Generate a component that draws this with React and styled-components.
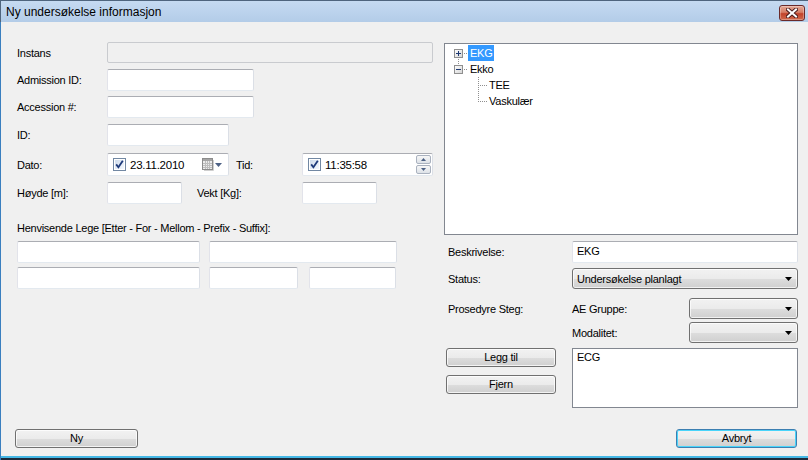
import React from 'react';
import styled, { createGlobalStyle } from 'styled-components';

const GlobalStyle = createGlobalStyle`
  html, body {
    margin: 0;
    padding: 0;
    background: #f0f0f0;
  }
  body {
    font-family: 'Liberation Sans', Arial, sans-serif;
    font-size: 11px;
    letter-spacing: -0.25px;
    color: #000;
  }
  * {
    box-sizing: border-box;
  }
`;

const fieldFont = `
  font-family: 'Liberation Sans', Arial, sans-serif;
  font-size: 11px;
  letter-spacing: -0.25px;
  color: #000;
`;

const Window = styled.div`
  width: 808px;
  height: 460px;
  display: flex;
  flex-direction: column;
  background: #f0f0f0;
  box-shadow: inset 1px 0 0 #3a7fbf, inset 0 -2px 0 #1c2a3a, inset 0 -4px 0 #45b8e6;
`;

const TitleBar = styled.div`
  height: 22px;
  flex: none;
  display: flex;
  align-items: flex-start;
  justify-content: space-between;
  padding: 0 3px 0 6px;
  background: linear-gradient(#c6dbf2, #b3cce8);
  box-shadow: inset 1px 1px 0 #4f657e;
`;

const Title = styled.span`
  font-size: 12px;
  letter-spacing: 0;
  line-height: 14px;
  margin-top: 5px;
`;

const CloseButton = styled.div`
  width: 26px;
  height: 16px;
  margin-top: 5px;
  border: 1px solid #6a2a2a;
  border-radius: 3px;
  background: linear-gradient(#e4a896 0%, #d67e66 45%, #c2432a 55%, #d0694c 100%);
  box-shadow: inset 0 0 0 1px rgba(255, 255, 255, 0.3);
  display: flex;
  align-items: center;
  justify-content: center;
`;

const Content = styled.div`
  flex: 1;
  display: flex;
  padding: 20px 10px 0 17px;
`;

const LeftPane = styled.div`
  width: 415px;
  flex: none;
  display: flex;
  flex-direction: column;
`;

const RightPane = styled.div`
  width: 354px;
  flex: none;
  margin: 1px 0 0 12px;
  display: flex;
  flex-direction: column;
`;

const FormRow = styled.div`
  display: flex;
  align-items: center;
  height: ${(p) => p.$h || 22}px;
  margin-top: ${(p) => p.$mt || 0}px;
  flex: none;
`;

const Label = styled.label`
  width: ${(p) => p.$w || 90}px;
  padding-left: ${(p) => p.$pl || 0}px;
  flex: none;
  line-height: 14px;
  white-space: nowrap;
`;

const Pair = styled.div`
  width: 195px;
  height: 100%;
  flex: none;
  display: flex;
  align-items: center;
`;

const SubLabel = styled.label`
  padding-left: ${(p) => p.$pl || 0}px;
  line-height: 14px;
  white-space: nowrap;
`;

const TextBox = styled.input`
  ${fieldFont}
  width: ${(p) => p.$w}px;
  height: 100%;
  margin: 0 0 0 ${(p) => p.$ml || 0}px;
  padding: 0 4px 3px;
  flex: none;
  border: 1px solid;
  border-color: ${(p) => (p.$disabled ? '#c9cbcf' : '#abadb3 #dbdfe6 #e3e9ef #e2e3ea')};
  border-radius: 2px;
  background: ${(p) => (p.$disabled ? '#f0f0f0' : '#fff')};
  outline: none;
`;

const SectionLabel = styled.div`
  margin-top: 17px;
  line-height: 14px;
  flex: none;
`;

const Picker = styled.div`
  width: ${(p) => p.$w}px;
  height: 100%;
  flex: none;
  display: flex;
  align-items: center;
  padding: 0 ${(p) => p.$pr || 0}px 0 5px;
  border: 1px solid;
  border-color: #abadb3 #dbdfe6 #e3e9ef #e2e3ea;
  border-radius: 2px;
  background: #fff;
`;

const PickerText = styled.span`
  margin-left: 4px;
  font-size: 11.5px;
  line-height: 14px;
`;

const PickerTail = styled.div`
  margin-left: auto;
  display: flex;
  align-items: center;
`;

const SpinBox = styled.div`
  margin-left: auto;
  display: flex;
  flex-direction: column;
  gap: 1px;
`;

const SpinButton = styled.div`
  width: 15px;
  height: 9px;
  border: 1px solid #aab2bf;
  border-radius: 2px;
  background: linear-gradient(#f7f7f7, #dde2e8);
  display: flex;
  align-items: center;
  justify-content: center;
`;

/* ---------- tree ---------- */

const TreeBox = styled.div`
  height: 192px;
  flex: none;
  border: 1px solid #828790;
  background: #fff;
  padding: 1px 0 0 5px;
`;

const TreeRow = styled.div`
  height: 16px;
  display: flex;
  align-items: center;
`;

const TreeLabel = styled.span`
  padding: 0 2px;
  line-height: 16px;
  background: ${(p) => (p.$selected ? '#3399ff' : 'transparent')};
  color: ${(p) => (p.$selected ? '#fff' : '#000')};
`;

/* ---------- right form ---------- */

const RRow = styled.div`
  display: grid;
  grid-template-columns: 128px 226px;
  align-items: ${(p) => p.$align || 'center'};
  height: ${(p) => p.$h || 21}px;
  margin-top: ${(p) => p.$mt || 0}px;
  flex: none;
`;

const FieldCell = styled.div`
  height: 100%;
  display: flex;
  align-items: center;
`;

const Select = styled.div`
  width: ${(p) => p.$w}px;
  height: 100%;
  flex: none;
  display: flex;
  align-items: center;
  justify-content: space-between;
  padding: 0 5px 0 4px;
  border: 1px solid #707070;
  border-radius: 3px;
  background: linear-gradient(#f2f2f2 0%, #ebebeb 50%, #dddddd 51%, #cfcfcf 100%);
  box-shadow: inset 0 0 0 1px rgba(255, 255, 255, 0.7);
  line-height: 14px;
`;

const ButtonColumn = styled.div`
  display: flex;
  flex-direction: column;
  gap: 8px;
  padding-left: 2px;
`;

const Button = styled.button`
  ${fieldFont}
  width: ${(p) => p.$w}px;
  height: 19px;
  padding: 0;
  border: 1px solid ${(p) => (p.$default ? '#3c7fb1' : '#707070')};
  border-radius: 3px;
  background: linear-gradient(#f2f2f2 0%, #ebebeb 50%, #dddddd 51%, #cfcfcf 100%);
  box-shadow: inset 0 0 0 1px ${(p) => (p.$default ? '#48d4fa' : 'rgba(255, 255, 255, 0.75)')};
  line-height: 15px;
  cursor: default;
`;

const TextArea = styled.textarea`
  ${fieldFont}
  width: 226px;
  height: 60px;
  margin: 0;
  padding: 2px 4px;
  border: 1px solid #828790;
  background: #fff;
  line-height: 13px;
  resize: none;
  outline: none;
  overflow: hidden;
`;

const Footer = styled.div`
  flex: none;
  display: flex;
  justify-content: space-between;
  padding: 0 11px 12px 15px;
`;

/* ---------- drawings ---------- */

const CloseGlyph = () => (
  <svg width="12" height="10" viewBox="0 0 12 10">
    <path d="M2 1.5 L10 8.5 M10 1.5 L2 8.5" stroke="#4a1c1c" strokeWidth="4" strokeLinecap="square" />
    <path d="M2 1.5 L10 8.5 M10 1.5 L2 8.5" stroke="#fff" strokeWidth="2" strokeLinecap="square" />
  </svg>
);

const Check = () => (
  <svg width="13" height="13" viewBox="0 0 13 13" style={{ flex: 'none' }}>
    <defs>
      <linearGradient id="cbfill" x1="0" y1="0" x2="1" y2="1">
        <stop offset="0" stopColor="#cfdcec" />
        <stop offset="1" stopColor="#f4f8fd" />
      </linearGradient>
    </defs>
    <rect x="0.5" y="0.5" width="12" height="12" fill="#fff" stroke="#7288a3" />
    <rect x="2" y="2" width="9" height="9" fill="url(#cbfill)" />
    <path d="M3.2 6.4 L5.4 9.2 L9.8 2.8" fill="none" stroke="#1e3a7a" strokeWidth="1.8" />
  </svg>
);

const CalendarIcon = () => (
  <svg width="20" height="13" viewBox="0 0 20 13">
    <rect x="0.5" y="0.5" width="10" height="11" fill="#ececec" stroke="#8c8c8c" />
    <rect x="1" y="1" width="9" height="2" fill="#a4a4a4" />
    <path d="M3.5 3 V11 M5.5 3 V11 M7.5 3 V11 M1 5.5 H10 M1 7.5 H10 M1 9.5 H10" stroke="#bdbdbd" />
    <path d="M11.5 2 V12.5 H2" fill="none" stroke="#cfcfcf" />
    <path d="M13 5 H20 L16.5 9 Z" fill="#4d6185" />
  </svg>
);

const SpinArrow = ({ up }) => (
  <svg width="5" height="3" viewBox="0 0 5 3">
    <path d={up ? 'M0 3 H5 L2.5 0 Z' : 'M0 0 H5 L2.5 3 Z'} fill="#4d6185" />
  </svg>
);

const DropArrow = () => (
  <svg width="7" height="4" viewBox="0 0 7 4">
    <path d="M0 0 H7 L3.5 4 Z" fill="#000" />
  </svg>
);

// dotted connector pixels, every other pixel like the win32 tree view
const dots = (x1, y1, x2, y2) => {
  const out = [];
  if (x1 === x2) {
    for (let y = y1; y <= y2; y += 2) out.push(<rect key={`v${x1}-${y}`} x={x1} y={y} width="1" height="1" />);
  } else {
    for (let x = x1; x <= x2; x += 2) out.push(<rect key={`h${y1}-${x}`} x={x} y={y1} width="1" height="1" />);
  }
  return out;
};

const RootGutter = ({ open, lineAbove, lineBelow }) => (
  <svg width="18" height="16" viewBox="0 0 18 16" style={{ flex: 'none' }}>
    <defs>
      <linearGradient id="expfill" x1="0" y1="0" x2="1" y2="1">
        <stop offset="0" stopColor="#ffffff" />
        <stop offset="1" stopColor="#d4d4d4" />
      </linearGradient>
    </defs>
    <g fill="#8f8f8f">
      {lineAbove && dots(8, 0, 8, 3)}
      {lineBelow && dots(8, 14, 8, 15)}
      {dots(14, 8, 16, 8)}
    </g>
    <rect x="4.5" y="4.5" width="8" height="8" fill="url(#expfill)" stroke="#8f8f8f" />
    <path d="M6 8.5 H11" stroke="#1f3a73" />
    {!open && <path d="M8.5 6 V11" stroke="#1f3a73" />}
  </svg>
);

const ChildGutter = ({ last }) => (
  <svg width="37" height="16" viewBox="0 0 37 16" style={{ flex: 'none' }}>
    <g fill="#8f8f8f">
      {dots(28, 0, 28, last ? 8 : 15)}
      {dots(30, 8, 36, 8)}
    </g>
  </svg>
);

const treeItems = [
  { label: 'EKG', root: true, open: false, selected: true, lineBelow: true },
  { label: 'Ekko', root: true, open: true, lineAbove: true },
  { label: 'TEE' },
  { label: 'Vaskulær', last: true },
];

const App = () => {
  return <>
    <GlobalStyle />
    <Window>
      <TitleBar>
        <Title>Ny undersøkelse informasjon</Title>
        <CloseButton><CloseGlyph /></CloseButton>
      </TitleBar>

      <Content>
        <LeftPane>
          <FormRow $h={21}>
            <Label>Instans</Label>
            <TextBox $w={326} $disabled readOnly />
          </FormRow>
          <FormRow $mt={6}>
            <Label>Admission ID:</Label>
            <TextBox $w={147} readOnly />
          </FormRow>
          <FormRow $mt={5}>
            <Label>Accession #:</Label>
            <TextBox $w={147} readOnly />
          </FormRow>
          <FormRow $mt={6}>
            <Label>ID:</Label>
            <TextBox $w={122} readOnly />
          </FormRow>
          <FormRow $mt={7} $h={23}>
            <Label>Dato:</Label>
            <Pair>
              <Picker $w={122} $pr={6}>
                <Check />
                <PickerText>23.11.2010</PickerText>
                <PickerTail><CalendarIcon /></PickerTail>
              </Picker>
              <SubLabel $pl={7}>Tid:</SubLabel>
            </Pair>
            <Picker $w={131} $pr={1}>
              <Check />
              <PickerText>11:35:58</PickerText>
              <SpinBox>
                <SpinButton><SpinArrow up /></SpinButton>
                <SpinButton><SpinArrow /></SpinButton>
              </SpinBox>
            </Picker>
          </FormRow>
          <FormRow $mt={6}>
            <Label>Høyde [m]:</Label>
            <Pair>
              <TextBox $w={75} readOnly />
              <SubLabel $pl={15}>Vekt [Kg]:</SubLabel>
            </Pair>
            <TextBox $w={75} readOnly />
          </FormRow>

          <SectionLabel>Henvisende Lege [Etter - For - Mellom - Prefix - Suffix]:</SectionLabel>
          <FormRow $mt={6}>
            <TextBox $w={183} readOnly />
            <TextBox $w={188} $ml={9} readOnly />
          </FormRow>
          <FormRow $mt={4}>
            <TextBox $w={183} readOnly />
            <TextBox $w={89} $ml={9} readOnly />
            <TextBox $w={87} $ml={11} readOnly />
          </FormRow>
        </LeftPane>

        <RightPane>
          <TreeBox>
            {treeItems.map((item) => (
              <TreeRow key={item.label}>
                {item.root
                  ? <RootGutter open={item.open} lineAbove={item.lineAbove} lineBelow={item.lineBelow} />
                  : <ChildGutter last={item.last} />}
                <TreeLabel $selected={item.selected}>{item.label}</TreeLabel>
              </TreeRow>
            ))}
          </TreeBox>

          <RRow $mt={6} $h={22}>
            <Label $pl={4} $w={128}>Beskrivelse:</Label>
            <TextBox $w={226} defaultValue="EKG" readOnly />
          </RRow>
          <RRow $mt={5}>
            <Label $pl={4} $w={128}>Status:</Label>
            <Select $w={226}>
              <span>Undersøkelse planlagt</span>
              <DropArrow />
            </Select>
          </RRow>
          <RRow $mt={9}>
            <Label $pl={4} $w={128}>Prosedyre Steg:</Label>
            <FieldCell>
              <Label $w={117}>AE Gruppe:</Label>
              <Select $w={109}><span /><DropArrow /></Select>
            </FieldCell>
          </RRow>
          <RRow $mt={3}>
            <span />
            <FieldCell>
              <Label $w={117}>Modalitet:</Label>
              <Select $w={109}><span /><DropArrow /></Select>
            </FieldCell>
          </RRow>
          <RRow $mt={5} $h={60} $align="start">
            <ButtonColumn>
              <Button $w={110}>Legg til</Button>
              <Button $w={110}>Fjern</Button>
            </ButtonColumn>
            <TextArea defaultValue="ECG" readOnly />
          </RRow>
        </RightPane>
      </Content>

      <Footer>
        <Button $w={123}>Ny</Button>
        <Button $w={121} $default>Avbryt</Button>
      </Footer>
    </Window>
  </>;
};

export default App;
